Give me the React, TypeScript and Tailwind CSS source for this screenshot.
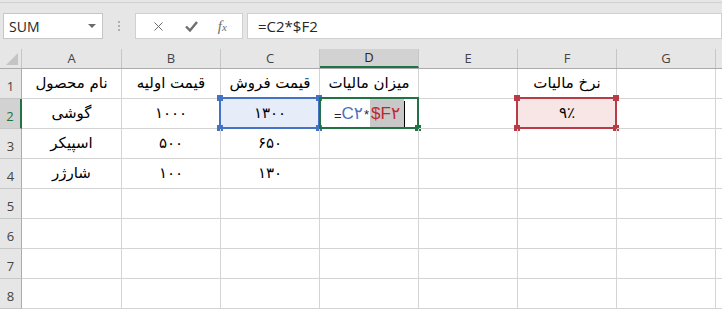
import { X } from "lucide-react";

const cols = ["A", "B", "C", "D", "E", "F", "G", ""];
const widths = ["w-[100px]", "w-[99px]", "w-[99px]", "w-[99px]", "w-[99px]", "w-[99px]", "w-[99px]", "w-[99px]"];

const data: string[][] = [
    ["نام محصول", "قیمت اولیه", "قیمت فروش", "میزان مالیات", "", "نرخ مالیات", "", ""],
    ["گوشی", "۱۰۰۰", "۱۳۰۰", "", "", "۹٪", "", ""],
    ["اسپیکر", "۵۰۰", "۶۵۰", "", "", "", "", ""],
    ["شارژر", "۱۰۰", "۱۳۰", "", "", "", "", ""],
    ["", "", "", "", "", "", "", ""],
    ["", "", "", "", "", "", "", ""],
    ["", "", "", "", "", "", "", ""],
    ["", "", "", "", "", "", "", ""],
];

function Handle({ pos, color }: { pos: string; color: string }) {
    return <span className={`absolute w-[6px] h-[6px] ${pos} ${color}`} />;
}

function FormulaBar() {
    return (
        <div className="bg-[#e6e6e6] pt-[2px]">
            <div className="border-t border-[#d0d0d0] h-[47px] flex items-start pt-[10px] pl-[3px]">
                <div className="w-[100px] h-[26px] bg-white border border-[#c6c6c6] flex items-center justify-between pl-[5px] pr-[6px]">
                    <span className="text-[14px] text-[#262626] font-['Open_Sans']">SUM</span>
                    <span className="w-0 h-0 border-l-[4px] border-r-[4px] border-t-[4px] border-l-transparent border-r-transparent border-t-[#6b6b6b]" />
                </div>
                <div className="w-[32px] h-[26px] flex flex-col items-center justify-center gap-[2px]">
                    <span className="w-[2px] h-[2px] bg-[#b0b0b0]" />
                    <span className="w-[2px] h-[2px] bg-[#b0b0b0]" />
                    <span className="w-[2px] h-[2px] bg-[#b0b0b0]" />
                </div>
                <div className="w-[108px] h-[26px] bg-white border border-[#d0d0d0] flex items-center justify-around px-[6px] text-[#6e6e6e]">
                    <X size={15} strokeWidth={1.6} />
                    <svg width="15" height="14" viewBox="0 0 15 14">
                        <path d="M2 7.5 L6 11.5 L13 3" fill="none" stroke="#6e6e6e" strokeWidth="2.4" />
                    </svg>
                    <span className="font-['Liberation_Serif'] italic text-[15px] leading-none">
                        f<span className="text-[11px]">x</span>
                    </span>
                </div>
                <div className="ml-[4px] flex-1 h-[26px] bg-white border border-[#d0d0d0] flex items-center pl-[10px] font-['Open_Sans'] text-[15px] text-[#262626]">
                    =C2*$F2
                </div>
            </div>
        </div>
    );
}

function FormulaCell() {
    return (
        <div className="h-full flex items-center pl-[14px] font-['Liberation_Sans','DejaVu_Sans',sans-serif]" dir="ltr">
            <span className="text-[13px] text-[#262626] mt-[4px]">=</span>
            <span className="text-[17px] text-[#4472c4]">C۲</span>
            <span className="text-[13px] text-[#262626] px-[1px] mt-[2px]">*</span>
            <span className="h-full flex items-center bg-[#c8c8c8] text-[17px] text-[#c0272d] pl-[1px] pr-[4px]">
                $F۲
            </span>
            <span className="w-[1px] h-[26px] bg-black" />
        </div>
    );
}

export default function App() {
    return (
        <div className="w-[722px] h-[317px] overflow-hidden bg-white">
            <FormulaBar />
            <div className="flex h-[20px] bg-[#e6e6e6] border-b border-[#ababab] text-[13px] text-[#444] font-['Open_Sans']">
                <div className="w-[22px] shrink-0 relative border-r border-[#c6c6c6]">
                    <svg className="absolute right-[3px] bottom-[3px]" width="12" height="12" viewBox="0 0 12 12">
                        <polygon points="12,0 12,12 0,12" fill="#c4c4c4" />
                    </svg>
                </div>
                {cols.map((c, i) => (
                    <div
                        key={i}
                        className={`${widths[i]} shrink-0 flex items-center justify-center border-r border-[#c6c6c6] ${
                            c === "D" ? "bg-[#d2d2d2] border-b-2 border-b-[#217346] text-[#262626]" : ""
                        }`}
                    >
                        {c}
                    </div>
                ))}
            </div>
            {data.map((row, r) => (
                <div key={r} className="flex h-[30px]">
                    <div
                        className={`w-[22px] shrink-0 flex items-end justify-center pb-[2px] text-[13px] font-['Open_Sans'] border-b border-[#c6c6c6] ${
                            r === 1
                                ? "bg-[#d2d2d2] text-[#217346] border-r-2 border-r-[#217346]"
                                : "bg-[#e6e6e6] text-[#444] border-r border-r-[#ababab]"
                        }`}
                    >
                        {r + 1}
                    </div>
                    {row.map((v, c) => (
                        <div
                            key={c}
                            className={`${widths[c]} shrink-0 relative border-r border-b border-[#d4d4d4] text-[15px] text-black font-['DejaVu_Sans',sans-serif] ${
                                r === 1 && c === 2 ? "bg-[#e6edf8]" : ""
                            } ${r === 1 && c === 5 ? "bg-[#f8e6e7]" : ""}`}
                        >
                            {r === 1 && c === 3 ? (
                                <FormulaCell />
                            ) : (
                                <div className="h-full flex items-center justify-center" dir="rtl">
                                    {v}
                                </div>
                            )}
                            {r === 1 && c === 2 && (
                                <div className="absolute -top-[2px] -left-[2px] -right-[1px] -bottom-[1px] border-2 border-[#4472c4]">
                                    <Handle pos="-top-[4px] -left-[4px]" color="bg-[#4472c4]" />
                                    <Handle pos="-top-[4px] -right-[4px]" color="bg-[#4472c4]" />
                                    <Handle pos="-bottom-[4px] -left-[4px]" color="bg-[#4472c4]" />
                                    <Handle pos="-bottom-[4px] -right-[4px]" color="bg-[#4472c4]" />
                                </div>
                            )}
                            {r === 1 && c === 3 && (
                                <div className="absolute -top-[2px] -left-[1px] -right-[1px] -bottom-[1px] border-2 border-[#217346]">
                                    <Handle pos="-bottom-[4px] -right-[4px]" color="bg-[#217346]" />
                                </div>
                            )}
                            {r === 1 && c === 5 && (
                                <div className="absolute -top-[2px] -left-[2px] -right-[1px] -bottom-[1px] border-2 border-[#b83b45]">
                                    <Handle pos="-top-[4px] -left-[4px]" color="bg-[#b83b45]" />
                                    <Handle pos="-top-[4px] -right-[4px]" color="bg-[#b83b45]" />
                                    <Handle pos="-bottom-[4px] -left-[4px]" color="bg-[#b83b45]" />
                                    <Handle pos="-bottom-[4px] -right-[4px]" color="bg-[#b83b45]" />
                                </div>
                            )}
                        </div>
                    ))}
                </div>
            ))}
        </div>
    );
}
